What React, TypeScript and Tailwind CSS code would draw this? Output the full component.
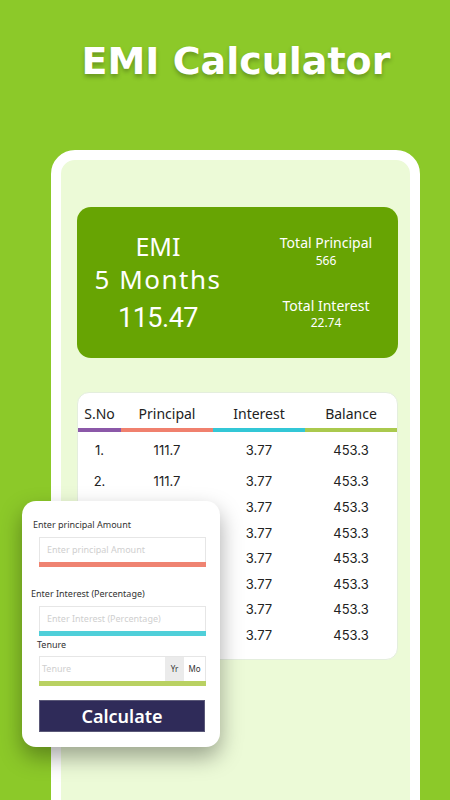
import React from 'react';

const rows = Array.from({ length: 8 }, (_, i) => ({
  sno: `${i + 1}.`,
  principal: '111.7',
  interest: '3.77',
  balance: '453.3',
}));

const baseFont = { fontFamily: '"Noto Sans", "Open Sans", sans-serif' };

const Field: React.FC<{ label: string; placeholder: string; bar: string; labelClass: string }> = ({
  label,
  placeholder,
  bar,
  labelClass,
}) => (
  <div>
    <div className={`text-[9px] leading-[12px] text-[#333] ${labelClass}`}>{label}</div>
    <div className="ml-[17px] mr-[14px] mt-[6px]">
      <div className="h-[25px] border border-[#e6e6e6] border-b-0 bg-white flex items-center px-[7px] text-[9px] text-[#cfcfcf]">
        {placeholder}
      </div>
      <div className={`h-[5px] ${bar}`} />
    </div>
  </div>
);

export default function App() {
  return (
    <div className="relative w-[450px] h-[800px] overflow-hidden bg-[#8cc929]" style={baseFont}>
      <h1
        className="pt-[33px] pl-[22px] text-center text-white text-[38px] leading-[56px] font-bold [text-shadow:0_3px_4px_rgba(0,0,0,0.25)]"
        style={{ fontFamily: '"DejaVu Sans", "Noto Sans", sans-serif' }}
      >
        EMI Calculator
      </h1>

      {/* phone frame */}
      <div className="ml-[51px] mt-[61px] w-[369px] h-[700px] rounded-[24px] border-[10px] border-white bg-[#ecfad7] pl-[16px] pr-[12px] pt-[47px]">
        <div className="h-[151px] rounded-[14px] bg-[#67a403] text-white grid grid-cols-[162px_144px] gap-x-[15px] items-center">
          <div className="text-center">
            <div className="text-[25px] leading-[33px]">EMI</div>
            <div className="text-[26px] leading-[33px] tracking-[1.5px]">5 Months</div>
            <div
              className="mt-[4px] text-[27px] leading-[36px] tracking-[-0.5px]"
              style={{ fontFamily: 'Roboto, sans-serif' }}
            >
              115.47
            </div>
          </div>
          <div className="text-center">
            <div className="text-[14px] leading-[18px]">Total Principal</div>
            <div className="text-[12px] leading-[18px]">566</div>
            <div className="mt-[27px] text-[14px] leading-[18px]">Total Interest</div>
            <div className="text-[12px] leading-[16px]">22.74</div>
          </div>
        </div>

        <div className="mt-[34px] h-[268px] rounded-[12px] bg-white border border-[#e4eedd] overflow-hidden">
          <div className="grid grid-cols-[43px_92px_92px_1fr] text-[14px] leading-[20px] text-[#222] text-center pt-[11px]">
            <div className="pb-[4px]">S.No</div>
            <div className="pb-[4px]">Principal</div>
            <div className="pb-[4px]">Interest</div>
            <div className="pb-[4px]">Balance</div>
            <div className="h-[4px] bg-[#8b58a8]" />
            <div className="h-[4px] bg-[#f0806e]" />
            <div className="h-[4px] bg-[#33c7d6]" />
            <div className="h-[4px] bg-[#aac94e]" />
          </div>
          <div className="pt-[6px]" style={{ fontFamily: 'Inter, Roboto, sans-serif' }}>
            {rows.map((r, i) => (
              <div
                key={i}
                className={`grid grid-cols-[43px_92px_92px_1fr] text-center text-[13px] text-[#222] items-center ${
                  i === 0 ? 'h-[26px]' : i === 1 ? 'h-[26px] mt-[5px]' : 'h-[25.5px]'
                }`}
              >
                <div>{r.sno}</div>
                <div>{r.principal}</div>
                <div>{r.interest}</div>
                <div>{r.balance}</div>
              </div>
            ))}
          </div>
        </div>
      </div>

      {/* input form card overlapping the table */}
      <div className="absolute left-[22px] top-[501px] w-[198px] h-[246px] rounded-[14px] bg-white shadow-[0_10px_22px_rgba(0,0,0,0.35)] pt-[18px]">
        <Field
          label="Enter principal Amount"
          placeholder="Enter principal Amount"
          bar="bg-[#ef8371]"
          labelClass="pl-[11px]"
        />
        <div className="mt-[21px]">
          <Field
            label="Enter Interest (Percentage)"
            placeholder="Enter Interest (Percentage)"
            bar="bg-[#4fcfd9]"
            labelClass="pl-[9px]"
          />
        </div>
        <div className="mt-[3px]">
          <div className="pl-[15px] text-[9px] leading-[12px] text-[#333]">Tenure</div>
          <div className="ml-[17px] mr-[14px] mt-[5px]">
            <div className="h-[25px] border border-[#e6e6e6] border-b-0 bg-white flex text-[9px]">
              <div className="flex-1 flex items-center px-[2px] text-[#cfcfcf]">Tenure</div>
              <div className="w-[19px] bg-[#ebebeb] flex items-center justify-center text-[8px] text-[#333]">Yr</div>
              <div className="w-[21px] flex items-center justify-center text-[8px] text-[#333]">Mo</div>
            </div>
            <div className="h-[5px] bg-[#b9d162]" />
          </div>
        </div>
        <button className="mt-[14px] ml-[17px] w-[166px] h-[32px] bg-[#2f2b59] border border-[#5a5878] text-white text-[18px] font-semibold flex items-center justify-center">
          Calculate
        </button>
      </div>
    </div>
  );
}
